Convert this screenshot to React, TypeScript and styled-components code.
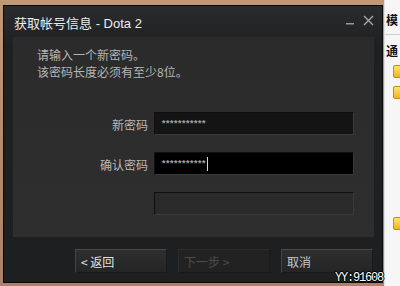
import React from "react";
import styled, { createGlobalStyle } from "styled-components";

const Global = createGlobalStyle`
  html, body { margin: 0; padding: 0; background: #b8916f; }
  body { width: 400px; height: 286px; overflow: hidden; }
  * { box-sizing: border-box; }
`;

const Desktop = styled.div`
  position: relative;
  width: 400px;
  height: 286px;
  display: grid;
  grid-template-columns: 384px 16px;
  overflow: hidden;
  font-family: "Liberation Sans", "Noto Sans CJK SC", sans-serif;
`;

const WallArea = styled.div`
  background: linear-gradient(180deg, #bf9876 0%, #b38a68 60%, #a9826a 100%);
  padding: 5px 1px 3px 3px;
`;

const Window = styled.div`
  width: 380px;
  height: 278px;
  border: 1px solid #0b0b0b;
  background: linear-gradient(180deg, #2a2b2c 0px, #1f2021 40px, #1e1f20 100%);
  display: flex;
  flex-direction: column;
`;

const TitleBar = styled.div`
  height: 31px;
  display: flex;
  align-items: center;
  padding: 0 8px 0 10px;
`;

const Title = styled.div`
  flex: 1;
  color: #ececec;
  font-size: 13px;
  white-space: pre;
  padding-top: 2px;
`;

const TitleLatin = styled.span`
  font-family: "Liberation Sans", sans-serif;
  font-size: 13px;
`;

const WinButtons = styled.div`
  display: flex;
  align-items: flex-start;
  gap: 6px;
  align-self: stretch;
  padding-top: 8px;
`;

const WinButton = styled.div`
  width: 12px;
  height: 12px;
  display: flex;
  align-items: center;
  justify-content: center;
`;

const Panel = styled.div`
  margin: 0 8px 0 9px;
  height: 200px;
  background: linear-gradient(180deg, #2b2b2b 0%, #2e2e2e 100%);
  padding: 9px 20px 0 24px;
  display: flex;
  flex-direction: column;
`;

const Intro = styled.div`
  color: #b6b6b6;
  font-family: "Noto Sans CJK SC", sans-serif;
  font-size: 12px;
  line-height: 17px;
`;

const Form = styled.div`
  margin-top: 32px;
  display: flex;
  flex-direction: column;
  gap: 17px;
`;

const Row = styled.div`
  display: grid;
  grid-template-columns: 111px 200px;
  column-gap: 6px;
  align-items: center;
`;

const Label = styled.div`
  text-align: right;
  color: #b9b9b9;
  font-family: "Noto Sans CJK SC", sans-serif;
  font-size: 12px;
  padding-top: 1px;
`;

const Field = styled.div<{ $bg: string }>`
  height: 23px;
  background: ${(p) => p.$bg};
  border-top: 1px solid #101010;
  border-left: 1px solid #101010;
  border-right: 1px solid #3a3a3a;
  border-bottom: 1px solid #3a3a3a;
  display: flex;
  align-items: center;
  padding-left: 6px;
`;

const Stars = styled.span`
  color: #9ea3a6;
  font-family: "Liberation Mono", monospace;
  font-size: 9px;
  letter-spacing: -1.4px;
  font-weight: bold;
  padding-top: 3px;
`;

const Caret = styled.span`
  display: inline-block;
  width: 1px;
  height: 14px;
  background: #d8d8d8;
  margin-left: 2px;
`;

const Footer = styled.div`
  flex: 1;
  display: flex;
  justify-content: flex-end;
  padding: 12px 9px 0 0;
  gap: 11px;
  align-items: flex-start;
`;

const Button = styled.div<{ $color: string }>`
  width: 92px;
  height: 24px;
  background: linear-gradient(180deg, #2e2e2f 0%, #252526 100%);
  border-top: 1px solid #4a4a4a;
  border-left: 1px solid #444;
  border-right: 1px solid #1a1a1a;
  border-bottom: 1px solid #1a1a1a;
  color: ${(p) => p.$color};
  font-family: "Noto Sans CJK SC", sans-serif;
  font-size: 12px;
  display: flex;
  align-items: center;
  padding-left: 5px;
`;

const DisabledButton = styled(Button)`
  background: #222223;
  border-top: 1px solid #2c2c2c;
  border-left: 1px solid #2c2c2c;
`;

const SideStrip = styled.div`
  background: #f6f6f6;
  padding-top: 12px;
  display: flex;
  flex-direction: column;
  overflow: hidden;
  border-left: 1px solid #e0e0e0;
`;

const SideText = styled.div`
  font-family: "Noto Sans CJK SC", sans-serif;
  font-weight: bold;
  font-size: 12px;
  color: #111;
  white-space: nowrap;
  line-height: 16px;
  padding-left: 1px;
`;

const SideRule = styled.div`
  height: 1px;
  background: #cfcfcf;
  margin: 6px 0 8px;
`;

const SideIcon = styled.div<{ $mt: number }>`
  margin-top: ${(p) => p.$mt}px;
  margin-left: 8px;
  width: 12px;
  height: 13px;
  border-radius: 2px;
  background: linear-gradient(180deg, #ffe66a, #f0b41c);
  border: 1px solid #c98a10;
`;

const Watermark = styled.div`
  position: absolute;
  right: 17px;
  bottom: 2px;
  color: #fff;
  font-family: "Liberation Mono", monospace;
  font-size: 12px;
  letter-spacing: -1.2px;
  line-height: 12px;
  text-shadow: 1px 0 0 #000, -1px 0 0 #000, 0 1px 0 #000, 0 -1px 0 #000;
`;

export default function App() {
  return (
    <>
      <Global />
      <Desktop>
        <WallArea>
          <Window>
            <TitleBar>
              <Title>
                获取帐号信息<TitleLatin> - Dota 2</TitleLatin>
              </Title>
              <WinButtons>
                <WinButton>
                  <svg width="10" height="12" viewBox="0 0 10 12">
                    <rect x="1" y="9" width="8" height="1.5" fill="#9a9a9a" />
                  </svg>
                </WinButton>
                <WinButton>
                  <svg width="11" height="11" viewBox="0 0 11 11">
                    <path d="M1 1 L10 10 M10 1 L1 10" stroke="#a8a8a8" strokeWidth="1.4" />
                  </svg>
                </WinButton>
              </WinButtons>
            </TitleBar>
            <Panel>
              <Intro>
                请输入一个新密码。
                <br />
                该密码长度必须有至少8位。
              </Intro>
              <Form>
                <Row>
                  <Label>新密码</Label>
                  <Field $bg="#141414">
                    <Stars>***********</Stars>
                  </Field>
                </Row>
                <Row>
                  <Label>确认密码</Label>
                  <Field $bg="#000000">
                    <Stars>***********</Stars>
                    <Caret />
                  </Field>
                </Row>
                <Row>
                  <span />
                  <Field $bg="#2a2a2a" />
                </Row>
              </Form>
            </Panel>
            <Footer>
              <Button $color="#e4e4e4">&lt; 返回</Button>
              <DisabledButton $color="#4c4c4c">下一步 &gt;</DisabledButton>
              <Button $color="#c8c8c8">取消</Button>
            </Footer>
          </Window>
        </WallArea>
        <SideStrip>
          <SideText>模</SideText>
          <SideRule />
          <SideText>通</SideText>
          <SideIcon $mt={6} />
          <SideIcon $mt={8} />
          <SideIcon $mt={118} />
        </SideStrip>
        <Watermark>YY:91608</Watermark>
      </Desktop>
    </>
  );
}
